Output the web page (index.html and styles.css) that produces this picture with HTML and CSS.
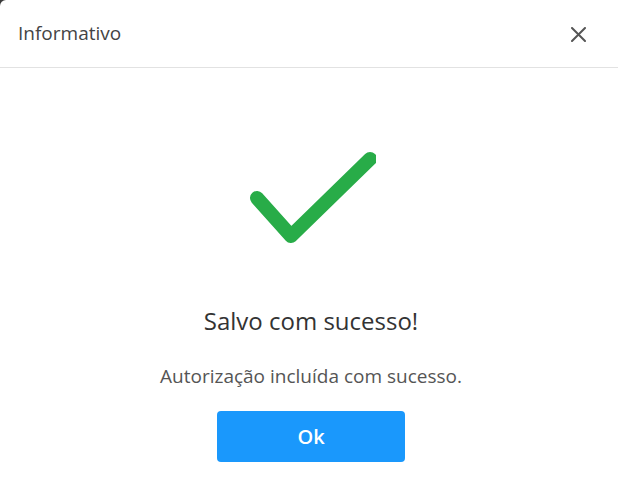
FILE: index.html
```html
<!DOCTYPE html>
<html lang="pt">
<head>
<meta charset="utf-8">
<title>Informativo</title>
<link rel="stylesheet" href="styles.css">
</head>
<body>
<div class="dialog">
  <header class="dialog-header">
    <h1 class="dialog-title">Informativo</h1>
    <button class="close-btn" aria-label="Fechar">
      <svg width="15" height="15" viewBox="0 0 15 15"><path d="M1 1L14 14M14 1L1 14" stroke="#555" stroke-width="2" stroke-linecap="round" fill="none"/></svg>
    </button>
  </header>
  <main class="dialog-body">
    <svg class="check" width="130" height="100" viewBox="0 0 130 100"><polyline points="11,53 45,91 124,14" fill="none" stroke="#28ac48" stroke-width="14" stroke-linecap="round" stroke-linejoin="round"/></svg>
    <h2 class="result-title">Salvo com sucesso!</h2>
    <p class="result-text">Autorização incluída com sucesso.</p>
    <button class="ok-btn">Ok</button>
  </main>
</div>
</body>
</html>
```

FILE: styles.css
```css
html, body {
  margin: 0;
  padding: 0;
  background: #3a3a3a;
  height: 100%;
}
.dialog {
  background: #fff;
  width: 618px;
  height: 499px;
  border-top-left-radius: 6px;
  font-family: "Open Sans", "Noto Sans", sans-serif;
  display: flex;
  flex-direction: column;
}
.dialog-header {
  height: 67px;
  border-bottom: 1px solid #e2e2e2;
  display: flex;
  align-items: center;
  justify-content: space-between;
  padding: 0 32px 0 18px;
  box-sizing: content-box;
}
.dialog-title {
  margin: 0 0 2px;
  font-size: 19px;
  line-height: 26px;
  font-weight: 400;
  color: #444;
}
.close-btn {
  border: 0;
  background: none;
  padding: 0;
  width: 15px;
  height: 15px;
  display: flex;
  margin-top: 1px;
}
.dialog-body {
  display: flex;
  flex-direction: column;
  align-items: center;
  padding-left: 4px;
}
.check {
  margin-top: 77px;
  display: block;
}
.result-title {
  margin: 60px 0 0;
  font-size: 24px;
  line-height: 32px;
  font-weight: 500;
  color: #333;
}
.result-text {
  margin: 26px 0 0;
  font-size: 19px;
  line-height: 26px;
  color: #555;
}
.ok-btn {
  margin-top: 22px;
  width: 188px;
  height: 51px;
  border: 0;
  border-radius: 4px;
  background: #1a98fc;
  color: #fff;
  font-family: inherit;
  font-size: 20px;
  font-weight: 600;
}
```
